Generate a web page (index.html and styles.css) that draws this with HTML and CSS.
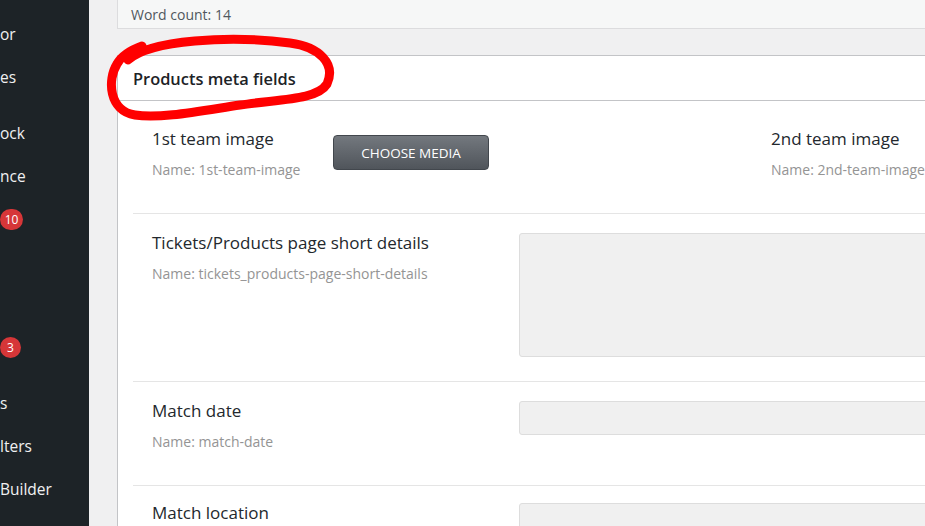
FILE: index.html
```html
<!DOCTYPE html>
<html>
<head>
<meta charset="utf-8">
<link rel="stylesheet" href="styles.css">
</head>
<body>
<nav class="sidebar">
  <ul class="menu">
    <li class="item">or</li>
    <li class="item">es</li>
    <li class="item gap">ock</li>
    <li class="item">nce</li>
    <li class="item"><span class="badge pill">10</span></li>
    <li class="item biggap"><span class="badge">3</span></li>
    <li class="item gap">s</li>
    <li class="item">lters</li>
    <li class="item">Builder</li>
  </ul>
</nav>
<main class="main">
  <div class="wordcount">Word count: 14</div>
  <section class="postbox">
    <div class="postbox-header">
      <h2 class="title">Products meta fields</h2>
    </div>
    <div class="fields">
      <div class="row row-images">
        <div class="half">
          <div class="label-block narrow">
            <div class="label">1st team image</div>
            <div class="name">Name: 1st-team-image</div>
          </div>
          <button class="media-btn">CHOOSE MEDIA</button>
        </div>
        <div class="half">
          <div class="label-block narrow">
            <div class="label">2nd team image</div>
            <div class="name">Name: 2nd-team-image</div>
          </div>
        </div>
      </div>
      <div class="row">
        <div class="label-block wide">
          <div class="label">Tickets/Products page short details</div>
          <div class="name">Name: tickets_products-page-short-details</div>
        </div>
        <div class="control"><div class="textarea"></div></div>
      </div>
      <div class="row">
        <div class="label-block wide">
          <div class="label">Match date</div>
          <div class="name">Name: match-date</div>
        </div>
        <div class="control"><div class="input"></div></div>
      </div>
      <div class="row last">
        <div class="label-block wide">
          <div class="label">Match location</div>
        </div>
        <div class="control"><div class="input"></div></div>
      </div>
    </div>
  </section>
  <svg class="scribble" width="925" height="526" viewBox="0 0 925 526">
    <path d="M128 60 C150 40 230 35 290 43 C320 47 336 64 327 84 C317 100 280 99 240 105 C200 111 160 119 135 115 C109 111 107 80 117 64 C122 55 131 50 142 46" fill="none" stroke="#ff0000" stroke-width="9" stroke-linecap="round" stroke-linejoin="round"/>
  </svg>
</main>
</body>
</html>
```
FILE: styles.css
```css
html, body {
  margin: 0;
  padding: 0;
}
body {
  width: 925px;
  height: 526px;
  overflow: hidden;
  display: flex;
  font-family: "Open Sans", "Noto Sans", sans-serif;
  background: #f0f0f1;
}
.sidebar {
  width: 89px;
  flex: none;
  background: #1d2327;
  overflow: hidden;
}
.menu {
  list-style: none;
  margin: 0;
  padding: 13px 0 0 0;
}
.item {
  height: 43px;
  line-height: 43px;
  color: #f0f0f1;
  font-size: 15.5px;
  white-space: nowrap;
}
.item.gap { margin-top: 13px; }
.item.biggap { margin-top: 85px; }
.badge {
  display: inline-block;
  vertical-align: middle;
  width: 21px;
  height: 21px;
  border-radius: 50%;
  background: #d63638;
  color: #fff;
  font-size: 12px;
  line-height: 21px;
  text-align: center;
  margin-top: -3px;
}
.badge.pill {
  width: 23px;
  border-radius: 11px;
}
.main {
  flex: 1;
  padding-left: 28px;
  position: relative;
  overflow: hidden;
}
.wordcount {
  width: 900px;
  height: 28px;
  line-height: 29px;
  background: #f6f7f7;
  border: 1px solid #dcdcde;
  border-top: none;
  padding-left: 13px;
  font-size: 14px;
  color: #50575e;
}
.postbox {
  margin-top: 26px;
  width: 1400px;
  background: #fff;
  border: 1px solid #c3c4c7;
}
.postbox-header {
  height: 44px;
  border-bottom: 1px solid #c3c4c7;
  padding-left: 15px;
  display: flex;
  align-items: center;
}
.title {
  margin: 0;
  font-size: 16.4px;
  font-weight: 600;
  color: #1d2327;
}
.fields {
  padding: 8px 0 0 15px;
}
.row {
  display: flex;
  padding: 20px 0 24px 19px;
  border-bottom: 1px solid #e5e5e5;
}
.row + .row { padding-top: 19px; }
.row.last { padding-top: 17px; }
.half {
  width: 619px;
  flex: none;
  display: flex;
  align-items: flex-start;
}
.label-block {
  flex: none;
  padding-bottom: 10px;
}
.label-block.narrow { width: 181px; }
.label-block.wide { width: 367px; }
.label {
  font-size: 17px;
  line-height: 20px;
  font-weight: 500;
  color: #23282d;
  margin-bottom: 12px;
}
.name {
  font-size: 14px;
  line-height: 18px;
  color: #949494;
}
.media-btn {
  margin-top: 6px;
  width: 156px;
  height: 35px;
  border: 1px solid #42474d;
  border-radius: 4px;
  background: linear-gradient(#73787e, #50555b);
  color: #fff;
  font-family: inherit;
  font-size: 13.5px;
  padding: 0;
}
.control {
  width: 600px;
  flex: none;
}
.textarea, .input {
  background: #f0f0f0;
  border: 1px solid #dddddd;
  border-radius: 3px;
}
.textarea { height: 122px; }
.input { height: 32px; }
.scribble {
  position: absolute;
  left: -89px;
  top: 0;
  pointer-events: none;
}
```
